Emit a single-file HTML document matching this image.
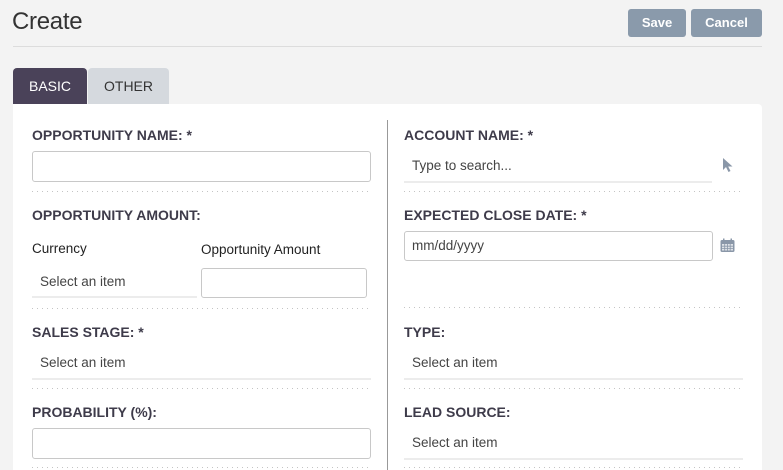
<!DOCTYPE html>
<html><head><meta charset="utf-8"><style>
*{margin:0;padding:0;box-sizing:border-box}
html,body{width:783px;height:470px;overflow:hidden}
body{background:#f3f3f3;font-family:"Liberation Sans",Arial,sans-serif;position:relative;color:#333}
.a{position:absolute}
h1{position:absolute;left:12px;top:8px;font-size:24px;font-weight:normal;color:#333;letter-spacing:-0.3px}
.btn{position:absolute;top:9px;height:28px;background:#8a9aab;color:#fff;font-weight:bold;font-size:13px;border-radius:3px;text-align:center;line-height:28px}
.hr{position:absolute;left:13px;top:46px;width:749px;height:1px;background:#dcdcdc}
.tab{position:absolute;top:68px;height:36px;line-height:36px;font-size:14px;text-align:center;border-radius:4px 4px 0 0}
.panel{position:absolute;left:13px;top:104px;width:749px;height:366px;background:#fff;border-radius:0 4px 0 0}
.lbl{position:absolute;font-weight:bold;font-size:14px;color:#3e3b4a}
.inp{position:absolute;height:31px;border:1px solid #c8c8c8;border-radius:3px;background:#fff}
.txt{position:absolute;font-size:13.5px;color:#444}
.ul{position:absolute;height:2px;background:#ececec}
.dots{position:absolute;height:1px;background-image:linear-gradient(to right,#c4c4c4 1px,transparent 1px);background-size:5px 1px}
</style></head><body>
<h1>Create</h1>
<div class="btn" style="left:628px;width:58px">Save</div>
<div class="btn" style="left:691px;width:71px">Cancel</div>
<div class="hr"></div>
<div class="tab" style="left:13px;width:74px;background:#4a4259;color:#fff">BASIC</div>
<div class="tab" style="left:88px;width:81px;background:#d5d9de;color:#333">OTHER</div>
<div class="panel"></div>
<div class="a" style="left:387px;top:120px;width:1px;height:350px;background:#999"></div>

<div class="lbl" style="left:32px;top:127px">OPPORTUNITY NAME: *</div>
<div class="inp" style="left:32px;top:151px;width:339px"></div>
<div class="dots" style="left:32px;top:191px;width:340px"></div>

<div class="lbl" style="left:32px;top:207px">OPPORTUNITY AMOUNT:</div>
<div class="txt" style="left:32px;top:241px;color:#222">Currency</div>
<div class="txt" style="left:201px;top:242px;color:#222">Opportunity Amount</div>
<div class="txt" style="left:40px;top:274px">Select an item</div>
<div class="ul" style="left:32px;top:296px;width:165px"></div>
<div class="inp" style="left:201px;top:268px;width:166px;height:30px"></div>
<div class="dots" style="left:32px;top:308px;width:340px"></div>

<div class="lbl" style="left:32px;top:324px">SALES STAGE: *</div>
<div class="txt" style="left:40px;top:355px">Select an item</div>
<div class="ul" style="left:32px;top:378px;width:339px"></div>
<div class="dots" style="left:32px;top:388px;width:340px"></div>

<div class="lbl" style="left:32px;top:404px">PROBABILITY (%):</div>
<div class="inp" style="left:32px;top:428px;width:339px"></div>
<div class="dots" style="left:32px;top:467px;width:340px"></div>

<div class="lbl" style="left:404px;top:127px">ACCOUNT NAME: *</div>
<div class="txt" style="left:412px;top:158px">Type to search...</div>
<svg class="a" style="left:722px;top:157px" width="12" height="16" viewBox="0 0 12 16"><path d="M1 1 L1 13 L4 10 L6.5 15 L8.5 14 L6.2 9.5 L10.5 9.5 Z" fill="#8a97a8"/></svg>
<div class="ul" style="left:404px;top:181px;width:308px"></div>
<div class="dots" style="left:404px;top:191px;width:340px"></div>

<div class="lbl" style="left:404px;top:207px">EXPECTED CLOSE DATE: *</div>
<div class="inp" style="left:404px;top:231px;width:309px;height:30px"></div>
<div class="txt" style="left:412px;top:238px">mm/dd/yyyy</div>
<svg class="a" style="left:720px;top:238px" width="15" height="15" viewBox="0 0 15 15"><rect x="0.5" y="2" width="14" height="12" rx="1.5" fill="#8a97a8"/><rect x="3" y="0.5" width="1.5" height="3" fill="#8a97a8"/><rect x="10.5" y="0.5" width="1.5" height="3" fill="#8a97a8"/><rect x="2" y="6" width="11" height="6.5" fill="#dfe3e8"/><path d="M2 8.2H13M2 10.4H13M4.7 6V12.5M7.5 6V12.5M10.2 6V12.5" stroke="#8a97a8" stroke-width="0.8"/></svg>
<div class="dots" style="left:404px;top:307px;width:340px"></div>

<div class="lbl" style="left:404px;top:324px">TYPE:</div>
<div class="txt" style="left:412px;top:355px">Select an item</div>
<div class="ul" style="left:404px;top:378px;width:339px"></div>
<div class="dots" style="left:404px;top:388px;width:340px"></div>

<div class="lbl" style="left:404px;top:404px">LEAD SOURCE:</div>
<div class="txt" style="left:412px;top:435px">Select an item</div>
<div class="ul" style="left:404px;top:458px;width:339px"></div>
<div class="dots" style="left:404px;top:467px;width:340px"></div>
</body></html>
